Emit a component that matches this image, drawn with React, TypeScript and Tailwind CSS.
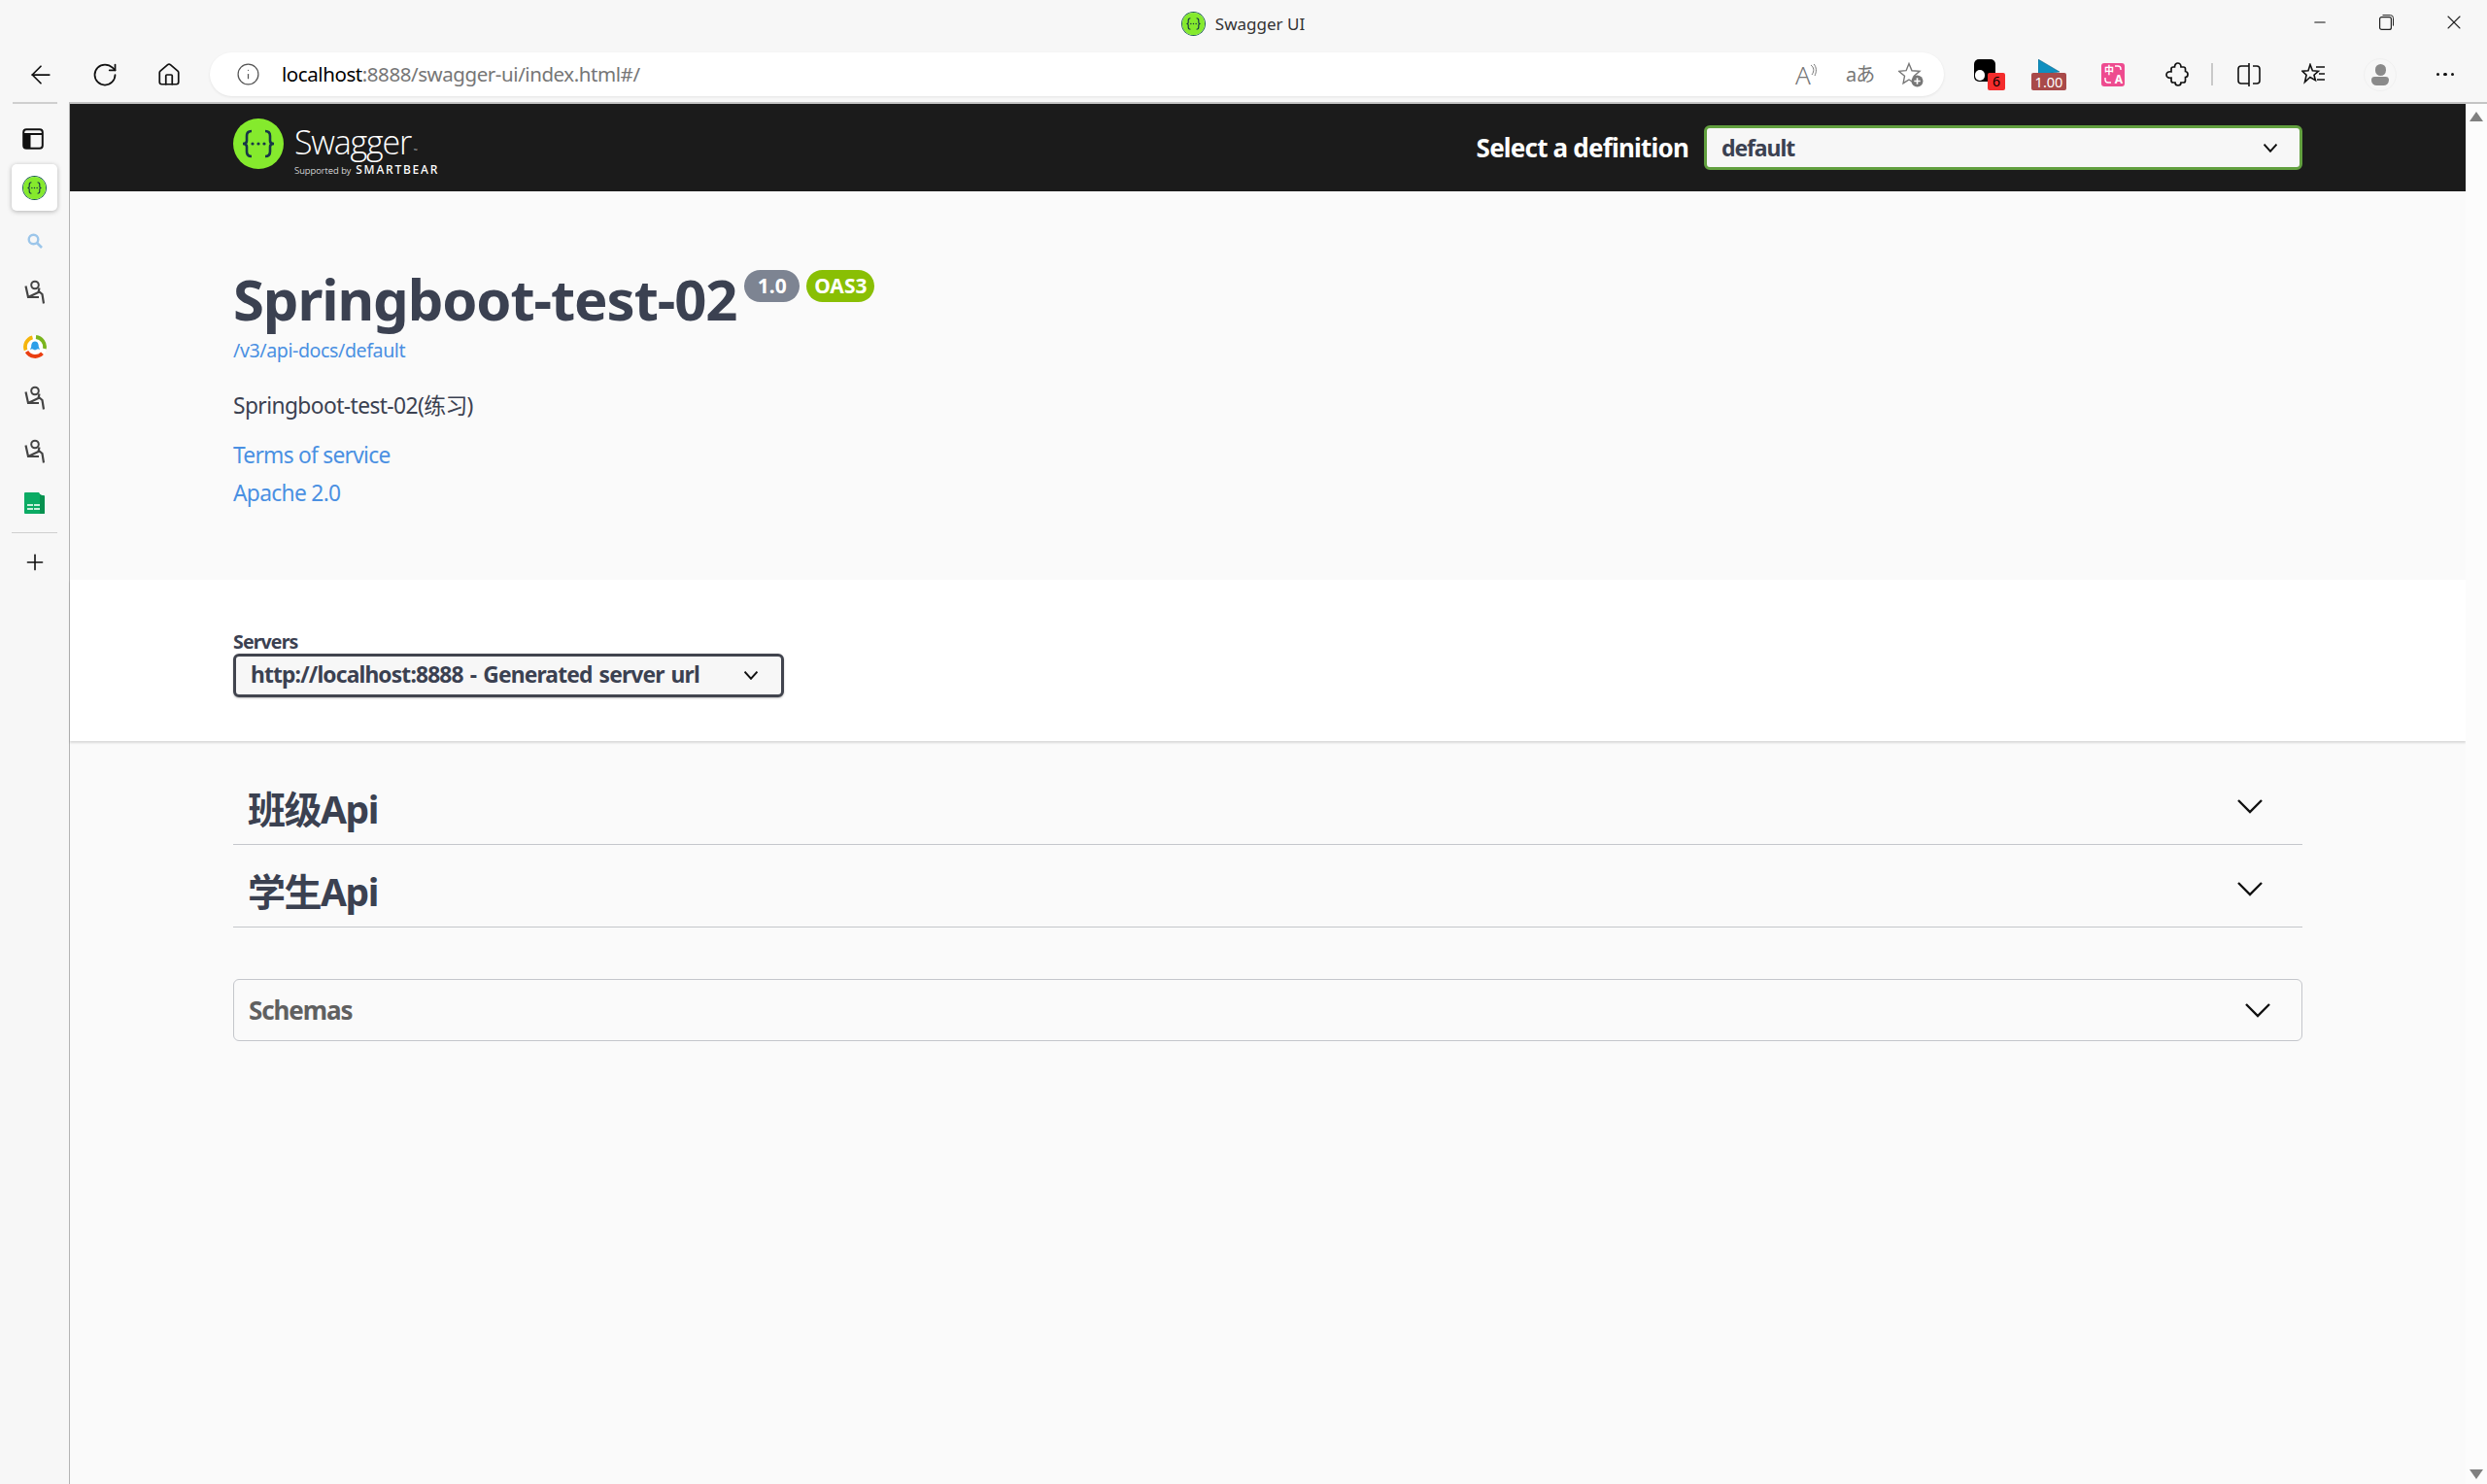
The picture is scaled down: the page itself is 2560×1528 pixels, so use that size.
import { ArrowLeft, RotateCw, Home, Info, Plus, Minus, X } from "lucide-react"

const FONT = "font-['Noto_Sans','Noto_Sans_CJK_SC',sans-serif]"

function SwaggerMark({ size }: { size: number }) {
  return (
    <svg width={size} height={size} viewBox="0 0 52 52" className="block">
      <circle cx="26" cy="26" r="26" fill="#85ea2d" />
      <path
        d="M19 13c-4 0-5 2-5 5v5c0 2-1 3-4 3 3 0 4 1 4 3v5c0 3 1 5 5 5M33 13c4 0 5 2 5 5v5c0 2 1 3 4 3-3 0-4 1-4 3v5c0 3-1 5-5 5"
        fill="none"
        stroke="#173647"
        strokeWidth="2.6"
      />
      <circle cx="20" cy="26" r="1.6" fill="#173647" />
      <circle cx="26" cy="26" r="1.6" fill="#173647" />
      <circle cx="32" cy="26" r="1.6" fill="#173647" />
    </svg>
  )
}

function Chevron({ w, h, stroke }: { w: number; h: number; stroke: number }) {
  return (
    <svg width={w} height={h} viewBox="0 0 26 15" preserveAspectRatio="none" className="block">
      <path d="M1 1l12 12L25 1" fill="none" stroke="#111" strokeWidth={stroke} />
    </svg>
  )
}

function Gesture() {
  return (
    <svg width="21" height="25" viewBox="0 0 21 25" className="block">
      <circle cx="11" cy="5.5" r="3.8" fill="none" stroke="#444" strokeWidth="2" />
      <path d="M1.500 6.500l2.500 11.500h11M4 18l10.500-5 1-4.500M15 12l3.500 3 1.500 9.500" fill="none" stroke="#444" strokeWidth="2.200" />
    </svg>
  )
}

function TencentIcon() {
  return (
    <svg width="24" height="24" viewBox="0 0 24 24" className="block">
      <circle cx="12" cy="12" r="12" fill="#fff" />
      <path d="M2.600 15.500A10 10 0 0 1 9.500 2.300" fill="none" stroke="#f5b50c" strokeWidth="3.800" />
      <path d="M13 2A10 10 0 0 1 21.800 14" fill="none" stroke="#7ab51d" strokeWidth="3.800" />
      <path d="M3.500 17A10 10 0 0 0 19.500 18.800" fill="none" stroke="#ea3f12" strokeWidth="3.800" />
      <path d="M12 6.500c3 0 3.800 3 3.800 5.500l1.200 3-2-.8-3 1.300-3-1.300-2 .8 1.200-3c0-2.500.8-5.500 3.800-5.500Z" fill="#2c9fe8" />
    </svg>
  )
}

function SheetIcon() {
  return (
    <svg width="21" height="22" viewBox="0 0 21 22" className="block">
      <path d="M1 0h14l2 3h3a1 1 0 0 1 1 1v17a1 1 0 0 1-1 1H1a1 1 0 0 1-1-1V1a1 1 0 0 1 1-1Z" fill="#0bab64" />
      <path d="M16 2l5 2v17a1 1 0 0 1-1 1h-4Z" fill="#07914f" />
      <path d="M3 12h6v2H3ZM10 12h6v2h-6ZM3 16h6v2H3ZM10 16h6v2h-6Z" fill="#c9f0dc" />
    </svg>
  )
}

function Sidebar() {
  return (
    <aside className="w-[71px] shrink-0 bg-[#f7f7f7] flex flex-col items-center">
      <div className="w-[46px] h-[2px] bg-[#cfcfcf]" />
      <svg width="22" height="22" viewBox="0 0 22 22" className="mt-[25px] -ml-[3px]">
        <rect x="1.200" y="1.200" width="19.600" height="19.600" rx="3" fill="none" stroke="#111" strokeWidth="2" />
        <path d="M1 6h20" stroke="#111" strokeWidth="2" />
        <rect x="1.500" y="6" width="7" height="14.500" fill="#111" />
      </svg>
      <div className="mt-[15px] w-[47px] h-[48px] bg-white rounded-[5px] shadow-[0_1px_5px_rgba(0,0,0,0.28)] flex items-center justify-center">
        <div className="rounded-full ring-1 ring-[#1f5f55]">
          <SwaggerMark size={23} />
        </div>
      </div>
      <svg width="16" height="16" viewBox="0 0 16 16" className="mt-[23px]">
        <circle cx="6.500" cy="6.500" r="4.800" fill="none" stroke="#9cc6ea" strokeWidth="2.400" />
        <path d="M10 10l5 5" stroke="#9cc6ea" strokeWidth="2.600" />
      </svg>
      <div className="mt-[32px]">
        <Gesture />
      </div>
      <div className="mt-[32px]">
        <TencentIcon />
      </div>
      <div className="mt-[28px]">
        <Gesture />
      </div>
      <div className="mt-[30px]">
        <Gesture />
      </div>
      <div className="mt-[30px]">
        <SheetIcon />
      </div>
      <div className="mt-[19px] w-[47px] h-px bg-[#cfcfcf]" />
      <Plus size={26} strokeWidth={1.5} color="#111" className="mt-[17px]" />
    </aside>
  )
}

function ToolSlot({ className, children }: { className: string; children: React.ReactNode }) {
  return <div className={`${className} shrink-0 flex items-center justify-center`}>{children}</div>
}

function BrowserChrome() {
  return (
    <div className="bg-[#f7f7f7]">
      <div className="h-[54px] grid grid-cols-[1fr_auto_1fr]">
        <div />
        <div className="flex items-center gap-[11px] pb-[5px]">
          <div className="rounded-full ring-1 ring-[#1f5f55]">
            <SwaggerMark size={23} />
          </div>
          <span className="text-[17px] text-[#333]">Swagger UI</span>
        </div>
        <div className="flex justify-end">
          <div className="w-[69px] h-[46px] flex items-center justify-center">
            <Minus size={18} strokeWidth={1.4} color="#111" />
          </div>
          <div className="w-[69px] h-[46px] flex items-center justify-center">
            <svg width="15" height="16" viewBox="0 0 15 16">
              <rect x="0.600" y="2.600" width="11.800" height="12.800" rx="2" fill="none" stroke="#222" strokeWidth="1.200" />
              <path d="M3.500.6h8a3 3 0 0 1 3 3v8" fill="none" stroke="#222" strokeWidth="1" />
            </svg>
          </div>
          <div className="w-[69px] h-[46px] flex items-center justify-center">
            <X size={24} strokeWidth={1.1} color="#222" />
          </div>
        </div>
      </div>
      <div className="h-[51px] pb-[6px] pl-[9px] flex items-center">
        <ToolSlot className="w-[66px]">
          <ArrowLeft size={30} strokeWidth={1.4} color="#111" />
        </ToolSlot>
        <ToolSlot className="w-[66px]">
          <RotateCw size={28} strokeWidth={1.5} color="#111" />
        </ToolSlot>
        <ToolSlot className="w-[66px]">
          <Home size={26} strokeWidth={1.6} color="#111" />
        </ToolSlot>
        <div className="ml-[9px] flex-1 h-[45px] bg-white rounded-full shadow-[0_1px_3px_rgba(0,0,0,0.08)] flex items-center pl-[27px] pr-[21px]">
          <Info size={25} strokeWidth={1.2} color="#555" />
          <span className="ml-[22px] text-[20.5px] text-[#767676] tracking-[-0.43px]">
            <span className="text-black">localhost</span>:8888/swagger-ui/index.html#/
          </span>
          <div className="ml-auto flex items-center">
            <div className="w-[22px] flex items-end">
              <span className="text-[26px] leading-none font-light text-[#777]">A</span>
              <svg width="7" height="14" viewBox="0 0 7 14" className="-ml-px mb-[10px] shrink-0">
                <path d="M1 1c3 2 4 6 1 10M4 0c3 3 3 8 1 12" fill="none" stroke="#777" strokeWidth="1" />
              </svg>
            </div>
            <span className="ml-[30px] w-[27px] text-[20px] leading-none text-[#777] whitespace-nowrap tracking-[-1px]">aあ</span>
            <svg width="26" height="26" viewBox="0 0 26 26" className="ml-[27px]">
              <path d="M11 1.500l3 7.300 8 .6-6 5.100 1.900 7.800-6.900-4.300-5.900 3.700 1.400-7.400-6-5 7.600-.6Z" fill="none" stroke="#777" strokeWidth="1.400" />
              <circle cx="19.500" cy="19.500" r="6" fill="#777" />
              <path d="M19.500 16.300v6.400M16.300 19.500h6.400" stroke="#fff" strokeWidth="1.600" />
            </svg>
          </div>
        </div>
        <div className="ml-[14px] flex items-center">
          <ToolSlot className="w-[66px]">
            <div className="relative w-[32px] h-[32px]">
              <div className="w-[22px] h-[23px] rounded-[5px] bg-black flex items-end pl-px pb-px">
                <span className="w-[10px] h-[11px] rounded-full bg-white" />
              </div>
              <span className="absolute right-0 bottom-0 w-[18px] h-[18px] rounded-[2px] bg-[#f42c2c] text-[14px] leading-[18px] text-center text-black">
                6
              </span>
            </div>
          </ToolSlot>
          <ToolSlot className="w-[56px]">
            <div className="relative w-[36px] h-[32px]">
              <svg width="22" height="16" viewBox="0 0 22 16" className="ml-[7px] block">
                <path d="M0 0l22 13-22 3Z" fill="#0f8fbf" stroke="#07567a" strokeWidth="0.5" />
              </svg>
              <span className="absolute left-0 bottom-0 w-[36px] h-[18px] rounded-[2px] bg-[#a94a4a] text-[14.5px] leading-[18px] text-center text-white">
                1.00
              </span>
            </div>
          </ToolSlot>
          <ToolSlot className="w-[76px]">
            <div className="relative w-[24px] h-[24px] rounded-[3px] bg-[#ee4b8f] text-white font-bold">
              <span className="absolute left-[3px] top-[1px] text-[10px] leading-[12px]">中</span>
              <span className="absolute right-[2px] bottom-[1px] text-[12px] leading-[13px]">A</span>
              <svg width="24" height="24" viewBox="0 0 24 24" className="absolute inset-0">
                <path d="M14 3h3a3 3 0 0 1 3 3v1M4 15v2a3 3 0 0 0 3 3h3" fill="none" stroke="#fff" strokeWidth="1.400" />
              </svg>
            </div>
          </ToolSlot>
          <ToolSlot className="w-[56px]">
            <svg width="24" height="25" viewBox="0 0 24 25">
              <path
                d="M8 5h1.500c0-2.300 1.400-4 3.200-4s3.300 1.700 3.300 4h2.500a2 2 0 0 1 2 2v2.500c1.800.2 2.500 1.400 2.500 3s-.8 3-2.500 3V19a2 2 0 0 1-2 2h-2.500c0 1.700-1.300 3-3 3s-3-1.300-3-3H8a2 2 0 0 1-2-2v-2.800c-2.500.3-5-.4-5-3.200s2.500-3.500 5-3.200V7a2 2 0 0 1 2-2Z"
                fill="none"
                stroke="#111"
                strokeWidth="1.700"
              />
            </svg>
          </ToolSlot>
          <ToolSlot className="w-[16px]">
            <div className="w-[2px] h-[23px] bg-[#c9c9c9]" />
          </ToolSlot>
          <ToolSlot className="w-[60px]">
            <svg width="24" height="24" viewBox="0 0 24 24">
              <path d="M12 3H4a3 3 0 0 0-3 3v12a3 3 0 0 0 3 3h8M16 3h4a3 3 0 0 1 3 3v12a3 3 0 0 1-3 3h-4M12 0v24" fill="none" stroke="#111" strokeWidth="1.600" />
            </svg>
          </ToolSlot>
          <ToolSlot className="w-[72px]">
            <svg width="25" height="24" viewBox="0 0 25 24">
              <path d="M9 1.500l2.400 6.300 6 .5-4.400 3.900 1.400 5.500-5.500-3.200-5.400 5 1.600-7.300L1 8.300l6-.5Z" fill="none" stroke="#111" strokeWidth="1.600" />
              <path d="M15 4h9M18 11h6M16 17h8" stroke="#111" strokeWidth="1.600" />
            </svg>
          </ToolSlot>
          <ToolSlot className="w-[66px]">
            <div className="w-[34px] h-[34px] rounded-full border border-[#f0f0f0] flex flex-col items-center justify-center">
              <span className="w-[11px] h-[12px] rounded-full bg-[#8a8a8a]" />
              <span className="w-[18px] h-[9px] mt-px rounded-b-[8px] rounded-t-[5px] bg-[#8a8a8a]" />
            </div>
          </ToolSlot>
          <ToolSlot className="w-[68px]">
            <div className="flex gap-[4px]">
              <span className="w-[3.5px] h-[3.5px] rounded-full bg-[#111]" />
              <span className="w-[3.5px] h-[3.5px] rounded-full bg-[#111]" />
              <span className="w-[3.5px] h-[3.5px] rounded-full bg-[#111]" />
            </div>
          </ToolSlot>
        </div>
        <div className="w-[9px]" />
      </div>
    </div>
  )
}

function SwaggerTopbar() {
  return (
    <div className="h-[90px] bg-[#1b1b1b]">
      <div className="w-[2130px] h-full mx-auto flex items-center justify-between">
        <div className="flex items-center gap-[11px]">
          <div className="-mt-[8px]">
            <SwaggerMark size={52} />
          </div>
          <div className="text-white">
            <div className="font-['Open_Sans'] font-light text-[34px] leading-[36px] tracking-[-1.2px] mt-[6px]">
              Swagger
              <span className="text-[5px] align-[2px] ml-[3px] tracking-normal">™</span>
            </div>
            <div className="flex items-baseline gap-[5px] -mt-[4px] leading-[12px] whitespace-nowrap">
              <span className="text-[9.5px] font-light">Supported by</span>
              <span className="text-[12px] font-medium tracking-[1.8px]">SMARTBEAR</span>
            </div>
          </div>
        </div>
        <div className="flex items-center gap-[16px]">
          <span className="text-[26px] font-bold text-white tracking-[-0.8px]">Select a definition</span>
          <div className="w-[616px] h-[46px] rounded-[6px] border-[3px] border-[#62a03f] bg-[#f7f7f7] pl-[15px] pr-[23px] flex items-center justify-between">
            <span className="text-[23px] font-bold text-[#3b4151] tracking-[-1.1px]">default</span>
            <Chevron w={14} h={9} stroke={3.4} />
          </div>
        </div>
      </div>
    </div>
  )
}

function InfoBlock() {
  return (
    <section className="h-[400px] pt-[75px]">
      <div className="w-[2130px] mx-auto">
        <div className="flex items-start">
          <h1 className="text-[58px] leading-[72px] font-bold text-[#3b4151] whitespace-nowrap tracking-[-1.1px]">Springboot-test-02</h1>
          <span className="ml-[8px] mt-[6px] h-[33px] w-[57px] rounded-full bg-[#7d8492] text-[21px] leading-[33px] font-bold text-white text-center">
            1.0
          </span>
          <span className="ml-[7px] mt-[6px] h-[33px] w-[70px] rounded-full bg-[#89bf04] text-[21px] leading-[33px] font-bold text-white text-center">
            OAS3
          </span>
        </div>
        <a className="block mt-[4px] text-[19.6px] leading-[26px] text-[#4a90e2] tracking-[-0.4px]">/v3/api-docs/default</a>
        <p className="mt-[29px] text-[22.8px] leading-[30px] text-[#3b4151] tracking-[-0.6px]">Springboot-test-02(练习)</p>
        <a className="block mt-[21px] text-[22.8px] leading-[30px] text-[#4a90e2] tracking-[-0.75px]">Terms of service</a>
        <a className="block mt-[9px] text-[22.8px] leading-[30px] text-[#4a90e2] tracking-[-0.7px]">Apache 2.0</a>
      </div>
    </section>
  )
}

function Servers() {
  return (
    <section className="h-[166px] bg-white shadow-[0_2px_2px_rgba(0,0,0,0.13)] pt-[52px]">
      <div className="w-[2130px] mx-auto">
        <div className="text-[19.6px] leading-[23px] font-bold text-[#3b4151] tracking-[-0.9px]">Servers</div>
        <div className="mt-px w-[567px] h-[45px] rounded-[6px] border-[3px] border-[#41444e] bg-[#f7f7f7] shadow-[0_1px_2px_rgba(0,0,0,0.25)] pl-[15px] pr-[24px] flex items-center justify-between">
          <span className="text-[22.8px] font-bold text-[#3b4151] whitespace-nowrap tracking-[-0.85px] [word-spacing:2px]">http://localhost:8888 - Generated server url</span>
          <Chevron w={14} h={9} stroke={3.4} />
        </div>
      </div>
    </section>
  )
}

function TagRow({ title }: { title: string }) {
  return (
    <div className="h-[85px] border-b border-[#c4c6cb] flex items-center justify-between pl-[15px] pr-[41px]">
      <h3 className="text-[39px] leading-[50px] font-bold text-[#3b4151] mt-[12px] tracking-[-1.5px]">{title}</h3>
      <div className="mt-[6px]">
        <Chevron w={26} h={15} stroke={2.4} />
      </div>
    </div>
  )
}

export default function App() {
  return (
    <div className={`${FONT} w-full h-[1528px] overflow-hidden flex flex-col bg-[#f7f7f7]`}>
      <BrowserChrome />
      <div className="flex-1 min-h-0 flex">
        <Sidebar />
        <div className="flex-1 min-w-0 border-l border-t-2 border-[#c4c4c4] border-l-[#b4b4b4] flex bg-[#fafafa]">
          <main className="flex-1 min-w-0">
            <SwaggerTopbar />
            <InfoBlock />
            <Servers />
            <div className="w-[2130px] mx-auto pt-[22px]">
              <TagRow title="班级Api" />
              <TagRow title="学生Api" />
              <div className="mt-[53px] h-[64px] rounded-[6px] border border-[#c4c6cb] flex items-center justify-between pl-[15px] pr-[32px]">
                <span className="text-[26px] font-bold text-[#606060] tracking-[-1.1px]">Schemas</span>
                <Chevron w={26} h={15} stroke={2.4} />
              </div>
            </div>
          </main>
          <div className="w-[22px] shrink-0 bg-[#fcfcfc] flex flex-col items-center justify-between pt-[8px] pb-[5px]">
            <div className="w-0 h-0 border-x-[7px] border-x-transparent border-b-[10px] border-b-[#808080]" />
            <div className="w-0 h-0 border-x-[7px] border-x-transparent border-t-[10px] border-t-[#808080]" />
          </div>
        </div>
      </div>
    </div>
  )
}
